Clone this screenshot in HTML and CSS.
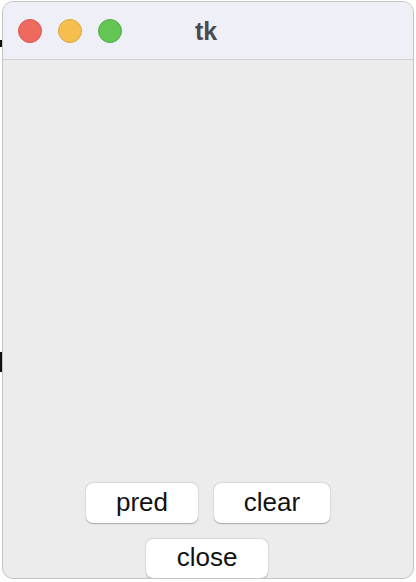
FILE: index.html
```html
<!DOCTYPE html>
<html>
<head>
<meta charset="utf-8">
<link rel="stylesheet" href="styles.css">
</head>
<body>
<span class="desk-mark mark-a"></span>
<span class="desk-mark mark-b"></span>
<div class="window">
  <div class="titlebar">
    <div class="lights">
      <span class="light red"></span>
      <span class="light yellow"></span>
      <span class="light green"></span>
    </div>
    <div class="title">tk</div>
  </div>
  <div class="content">
    <div class="row">
      <button class="btn btn-pred">pred</button>
      <button class="btn btn-clear">clear</button>
    </div>
    <div class="row">
      <button class="btn btn-close">close</button>
    </div>
  </div>
</div>
</body>
</html>
```
FILE: styles.css
```css
html, body {
  margin: 0;
  padding: 0;
  background: #ffffff;
  width: 416px;
  height: 582px;
  overflow: hidden;
}
body {
  position: relative;
  padding-top: 1px;
  box-sizing: border-box;
  font-family: "Liberation Sans", Arial, sans-serif;
}
.desk-mark {
  position: absolute;
  left: 0;
  width: 2px;
  background: #111;
}
.mark-a { top: 40px; height: 7px; }
.mark-b { top: 352px; height: 20px; }
.window {
  margin-left: 2px;
  width: 412px;
  height: 578px;
  box-sizing: border-box;
  border: 1px solid #c4c4c4;
  border-radius: 11px;
  overflow: hidden;
  background: #ececec;
  display: flex;
  flex-direction: column;
}
.titlebar {
  height: 57px;
  flex: none;
  background: #efeff7;
  border-bottom: 1px solid #d2d2d6;
  position: relative;
  display: flex;
  align-items: center;
  justify-content: center;
}
.lights {
  position: absolute;
  left: 15px;
  top: 17px;
  display: flex;
  gap: 16px;
}
.light {
  width: 24px;
  height: 24px;
  border-radius: 50%;
  box-sizing: border-box;
}
.red { background: #ee6a5f; border: 1px solid #d8574c; }
.yellow { background: #f5be4f; border: 1px solid #dea73c; }
.green { background: #62c554; border: 1px solid #52ad44; }
.title {
  font-weight: bold;
  font-size: 25px;
  color: #4b4b4f;
  margin-left: -4px;
  margin-top: 1px;
}
.content {
  flex: 1;
  display: flex;
  flex-direction: column;
  justify-content: flex-end;
  align-items: center;
  gap: 16px;
  padding-bottom: 0px;
}
.row {
  display: flex;
  gap: 16px;
  justify-content: center;
}
.btn {
  height: 40px;
  border: none;
  background: #ffffff;
  border-radius: 7px;
  box-shadow: 0 0.5px 1.5px rgba(0,0,0,0.28), 0 0 0 0.5px rgba(0,0,0,0.06);
  font-family: "Liberation Sans", Arial, sans-serif;
  font-size: 26px;
  color: #111;
  padding: 0 0 3px 0;
  line-height: 34px;
}
.btn-pred { width: 112px; }
.btn-clear { width: 116px; }
.btn-close { width: 122px; height: 39px; margin-left: -2px; }
```
